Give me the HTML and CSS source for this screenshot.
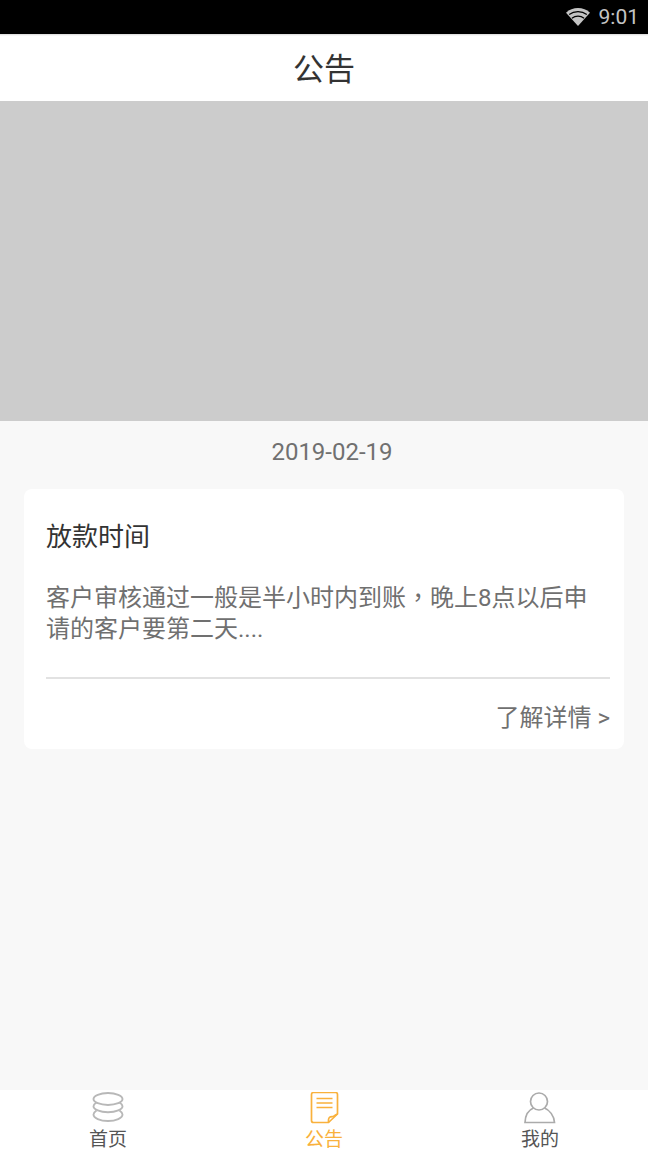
FILE: index.html
```html
<!DOCTYPE html>
<html lang="zh-CN">
<head>
    <meta charset="UTF-8">
    <meta name="viewport" content="width=device-width, initial-scale=1.0">
    <title>公告</title>
    <link rel="stylesheet" href="styles.css">
</head>
<body>
    <div class="status-bar">
        <svg class="wifi" width="26" height="20" viewBox="0 0 28 22">
            <path d="M14 21 0.8 6.200C4.400 3 9 1.200 14 1.200s9.600 1.800 13.200 5z" fill="#c4c4c4"/>
            <path d="M4.300 8.300C6.900 6.300 10.300 5.100 14 5.100s7.100 1.200 9.700 3.200M7.300 12.300C9.200 10.900 11.500 10.100 14 10.100s4.800.8 6.700 2.200" fill="none" stroke="#000" stroke-width="1.300"/>
        </svg>
        <span class="clock">9:01</span>
    </div>

    <header class="title-bar">
        <h1>公告</h1>
    </header>

    <main class="content">
        <div class="banner"></div>
        <p class="date">2019-02-19</p>
        <section class="card">
            <h2>放款时间</h2>
            <p class="summary">客户审核通过一般是半小时内到账<span class="comma" lang="zh-TW">，</span>晚上8点以后申<br>请的客户要第二天....</p>
            <div class="card-foot">了解详情 &gt;</div>
        </section>
    </main>

    <nav class="tab-bar">
        <a class="tab">
            <svg width="32" height="32" viewBox="0 0 32 32" fill="none" stroke="#b8b8b8" stroke-width="1.900">
                <ellipse cx="16" cy="7" rx="14.500" ry="6"/>
                <path d="M4.500 10.500C2.500 11.800 1.500 13 1.500 14.200 1.500 17.500 8 20.200 16 20.200s14.500-2.700 14.500-6c0-1.200-1-2.400-3-3.700"/>
                <path d="M4.500 18.500C2.500 19.800 1.500 21 1.500 22.500 1.500 26 8 29 16 29s14.500-3 14.500-6.500c0-1.500-1-2.700-3-4"/>
            </svg>
            <span>首页</span>
        </a>
        <a class="tab active">
            <svg width="32" height="32" viewBox="0 0 32 32" fill="none" stroke="#f9b13c" stroke-width="1.700">
                <path d="M20.500 30.500H5.500a2 2 0 0 1-2-2V2.500a2 2 0 0 1 2-2h22a2 2 0 0 1 2 2V22z"/>
                <path d="M8.500 6.500h16M8.500 11h16M8.500 15.500h16M20.500 30.500c0-1.500-.5-3.500.8-5 1.200-1.300 2.700-.8 3.700-1 1.500-.3 1.500-1.500 4.500-2.500"/>
            </svg>
            <span>公告</span>
        </a>
        <a class="tab">
            <svg width="32" height="32" viewBox="0 0 32 32" fill="none" stroke="#ababab" stroke-width="1.700">
                <circle cx="15" cy="9.500" r="8.500"/>
                <path d="M9.500 16C4.500 18 1.300 23.500 1 30.500h29.500C30 23.500 25.500 18 20.500 16"/>
            </svg>
            <span>我的</span>
        </a>
    </nav>
</body>
</html>
```

FILE: styles.css
```css
/* Basic styles for the page */
body {
    font-family: Roboto, "Noto Sans CJK SC", sans-serif;
    background-color: #f8f8f8;
    margin: 0;
    padding: 0;
    display: flex;
    flex-direction: column;
    height: 1152px;
    overflow: hidden;
}
.status-bar {
    height: 34px;
    box-sizing: border-box;
    background-color: #000;
    color: #c4c4c4;
    display: flex;
    justify-content: flex-end;
    align-items: center;
    gap: 8px;
    padding-right: 9px;
    flex-shrink: 0;
}
.clock {
    font-size: 21px;
}
.title-bar {
    height: 67px;
    box-sizing: border-box;
    padding-bottom: 3px;
    background-color: #fff;
    background-image: linear-gradient(#d8d8d8, #fff 2px);
    display: flex;
    align-items: center;
    justify-content: center;
    flex-shrink: 0;
}
h1 {
    margin: 0;
    font-size: 31px;
    font-weight: 400;
    color: #333;
}
.content {
    flex: 1;
}
.banner {
    height: 320px;
    background-color: #ccc;
}
.date {
    margin: 0;
    padding: 16px 0 0 16px;
    height: 52px;
    box-sizing: border-box;
    line-height: 30px;
    text-align: center;
    font-size: 24px;
    color: #707070;
}
.card {
    margin: 16px 24px 0;
    height: 260px;
    box-sizing: border-box;
    padding: 30px 14px 0 22px;
    background-color: #fff;
    border-radius: 8px;
}
h2 {
    margin: 0;
    font-size: 26px;
    line-height: 36px;
    font-weight: 400;
    color: #333;
}
.summary {
    margin: 25px 0 0;
    height: 97px;
    font-size: 24px;
    line-height: 31px;
    color: #707070;
}
.comma {
    font-family: "Noto Sans CJK TC", sans-serif;
}
.card-foot {
    border-top: 2px solid #e2e2e2;
    padding-top: 24px;
    text-align: right;
    font-size: 24px;
    line-height: 30px;
    color: #707070;
}
.tab-bar {
    height: 62px;
    background-color: #fff;
    display: grid;
    grid-template-columns: repeat(3, 216px);
    flex-shrink: 0;
}
.tab {
    display: flex;
    flex-direction: column;
    align-items: center;
    padding-top: 2px;
    font-size: 19px;
    line-height: 24px;
    color: #555;
}
.tab svg {
    display: block;
    margin-bottom: 4px;
}
.tab.active {
    color: #f9b13c;
}
```
